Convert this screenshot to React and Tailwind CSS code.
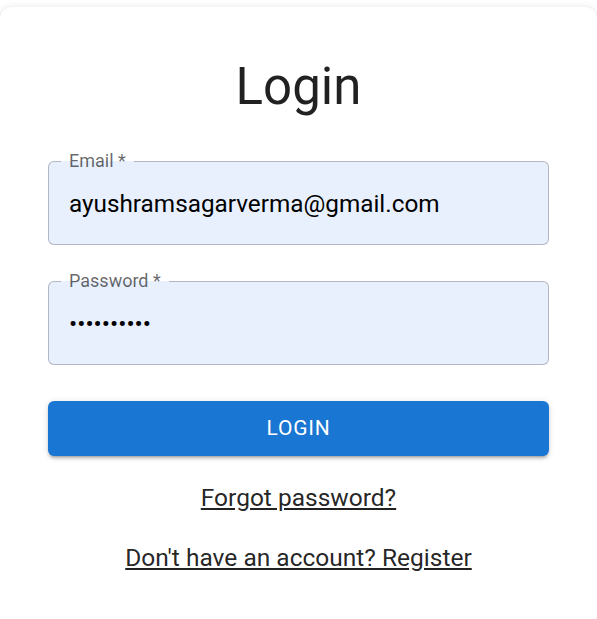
import React from 'react';

const Field = ({ label, type, value }) => {
  return (
    <div className="relative h-[84px] rounded-[6px] border border-[rgba(0,0,0,0.23)] bg-[#e8f0fe]">
      <span className="absolute left-[12px] top-[-1px] -translate-y-1/2 px-[8px] text-[18px] leading-[20px] text-[rgba(0,0,0,0.6)] bg-[linear-gradient(to_bottom,#ffffff_50%,#e8f0fe_50%)]">
        {label}
      </span>
      <input
        type={type}
        defaultValue={value}
        readOnly
        className="w-full h-full bg-transparent px-[20px] text-[24.3px] text-black outline-none"
      />
    </div>
  );
};

const App = () => {
  return (
    <div className="min-h-screen bg-white pt-[7px] font-['Roboto',sans-serif] overflow-hidden">
      <div className="w-full rounded-[12px] bg-white px-[48px] pt-[48px] pb-[60px] shadow-[0px_3px_3px_-2px_rgba(0,0,0,0.2),0px_3px_4px_0px_rgba(0,0,0,0.14),0px_1px_8px_0px_rgba(0,0,0,0.12)]">
        <h1 className="text-center text-[51px] leading-[63px] font-normal text-[rgba(0,0,0,0.87)]">
          Login
        </h1>

        <div className="mt-[43px]">
          <Field label="Email *" type="text" value="ayushramsagarverma@gmail.com" />
        </div>
        <div className="mt-[36px]">
          <Field label="Password *" type="password" value="abcdefghij" />
        </div>

        <button className="mt-[36px] w-full h-[55px] rounded-[6px] bg-[#1976d2] text-white text-[21px] font-normal uppercase tracking-[0.8px] shadow-[0px_4px_2px_-3px_rgba(0,0,0,0.2),0px_3px_3px_0px_rgba(0,0,0,0.14),0px_1px_7px_0px_rgba(0,0,0,0.12)]">
          Login
        </button>

        <p className="mt-[24px] text-center text-[24.5px] leading-[36px] text-[rgba(0,0,0,0.87)]">
          <a href="#" className="underline">Forgot password?</a>
        </p>
        <p className="mt-[24px] text-center text-[24.5px] leading-[36px] text-[rgba(0,0,0,0.87)]">
          <a href="#" className="underline">Don't have an account? Register</a>
        </p>
      </div>
    </div>
  );
};

export default App;
